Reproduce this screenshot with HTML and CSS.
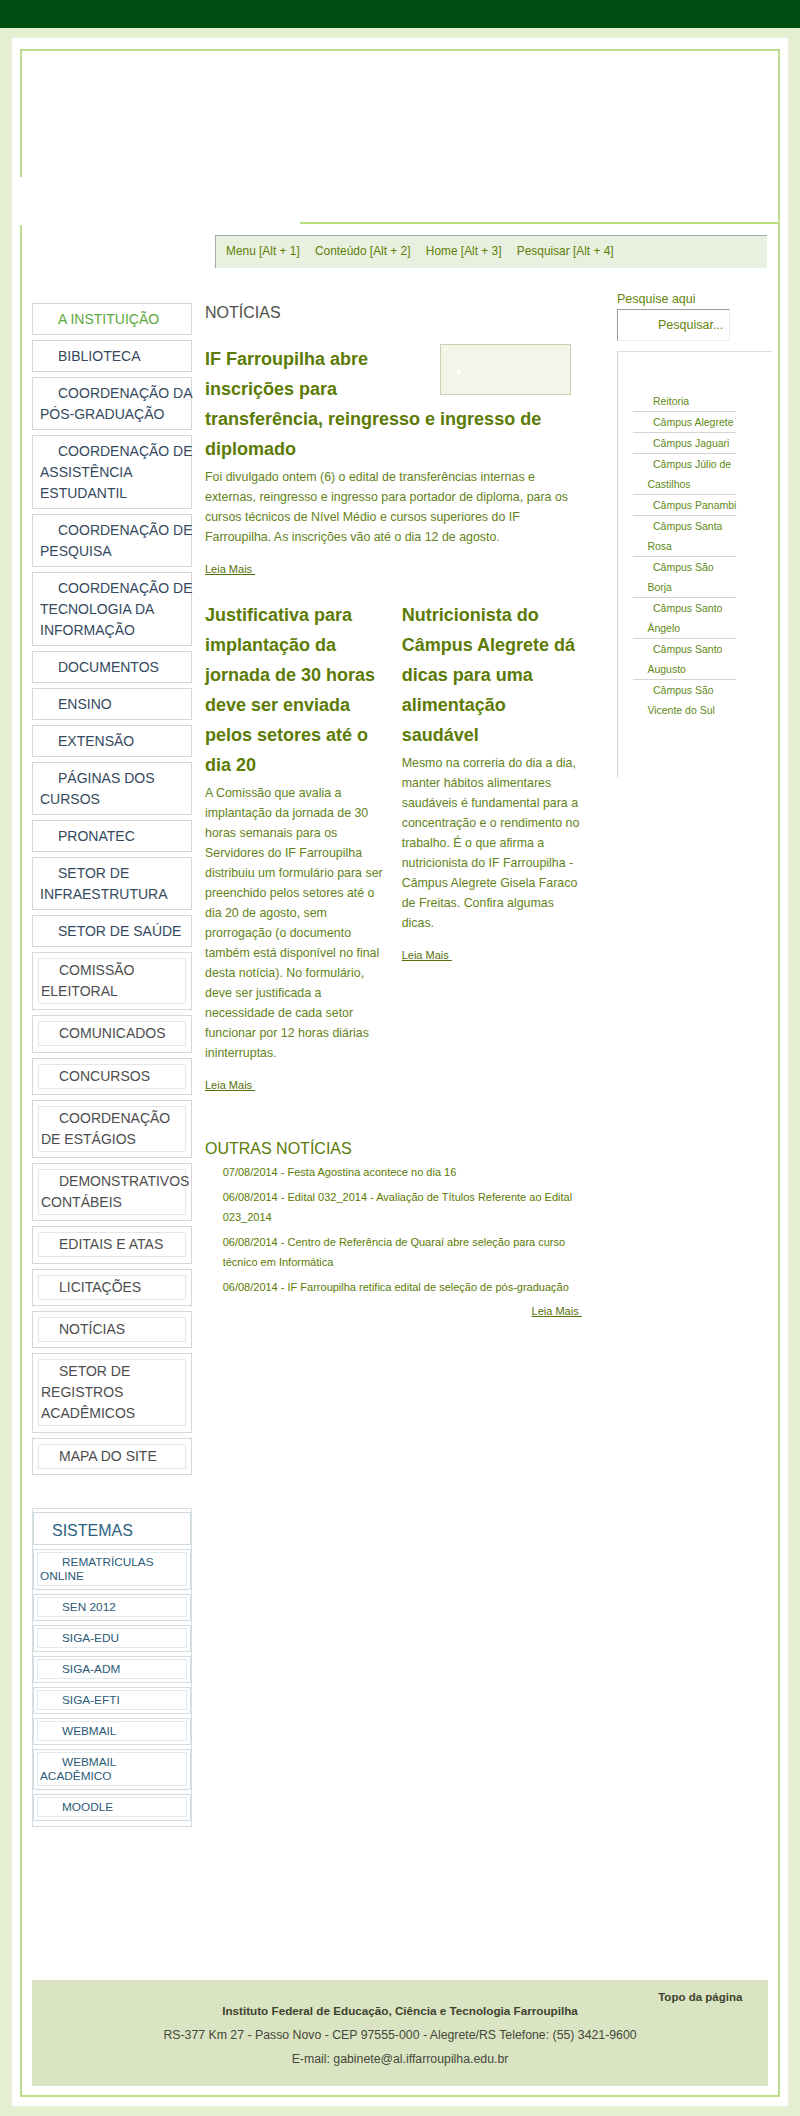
FILE: index.html
```html
<!DOCTYPE html>
<html lang="pt-BR">
<head>
<meta charset="utf-8">
<title>IF Farroupilha - Câmpus Alegrete</title>
<link rel="stylesheet" href="styles.css">
</head>
<body>
<div class="topbar"></div>
<div class="page">
  <div class="frame">
    <div class="banner"></div>
    <div class="banner-line"></div>
    <span class="frame-gap"></span>
    <nav class="access">
      <a href="#menu">Menu [Alt + 1]</a>
      <a href="#conteudo">Conteúdo [Alt + 2]</a>
      <a href="#home">Home [Alt + 3]</a>
      <a href="#busca">Pesquisar [Alt + 4]</a>
    </nav>
    <div class="columns">
      <aside class="sidebar-left" id="menu">
        <ul class="menu">
          <li class="menu-item active"><a href="#">A INSTITUIÇÃO</a></li>
          <li class="menu-item"><a href="#">BIBLIOTECA</a></li>
          <li class="menu-item"><a href="#">COORDENAÇÃO DA PÓS-GRADUAÇÃO</a></li>
          <li class="menu-item"><a href="#">COORDENAÇÃO DE ASSISTÊNCIA ESTUDANTIL</a></li>
          <li class="menu-item"><a href="#">COORDENAÇÃO DE PESQUISA</a></li>
          <li class="menu-item"><a href="#">COORDENAÇÃO DE TECNOLOGIA DA INFORMAÇÃO</a></li>
          <li class="menu-item"><a href="#">DOCUMENTOS</a></li>
          <li class="menu-item"><a href="#">ENSINO</a></li>
          <li class="menu-item"><a href="#">EXTENSÃO</a></li>
          <li class="menu-item"><a href="#">PÁGINAS DOS CURSOS</a></li>
          <li class="menu-item"><a href="#">PRONATEC</a></li>
          <li class="menu-item"><a href="#">SETOR DE INFRAESTRUTURA</a></li>
          <li class="menu-item"><a href="#">SETOR DE SAÚDE</a></li>
          <li class="nested"><a href="#">COMISSÃO ELEITORAL</a></li>
          <li class="nested"><a href="#">COMUNICADOS</a></li>
          <li class="nested"><a href="#">CONCURSOS</a></li>
          <li class="nested"><a href="#">COORDENAÇÃO DE ESTÁGIOS</a></li>
          <li class="nested"><a href="#">DEMONSTRATIVOS CONTÁBEIS</a></li>
          <li class="nested"><a href="#">EDITAIS E ATAS</a></li>
          <li class="nested"><a href="#">LICITAÇÕES</a></li>
          <li class="nested"><a href="#">NOTÍCIAS</a></li>
          <li class="nested"><a href="#">SETOR DE REGISTROS ACADÊMICOS</a></li>
          <li class="nested"><a href="#">MAPA DO SITE</a></li>
        </ul>
        <div class="systems">
          <div class="systems-title">SISTEMAS</div>
          <ul class="systems-list">
            <li><a href="#">REMATRÍCULAS ONLINE</a></li>
            <li><a href="#">SEN 2012</a></li>
            <li><a href="#">SIGA-EDU</a></li>
            <li><a href="#">SIGA-ADM</a></li>
            <li><a href="#">SIGA-EFTI</a></li>
            <li><a href="#">WEBMAIL</a></li>
            <li><a href="#">WEBMAIL ACADÊMICO</a></li>
            <li><a href="#">MOODLE</a></li>
          </ul>
        </div>
      </aside>

      <main class="content" id="conteudo">
        <h2 class="section-title">NOTÍCIAS</h2>
        <article class="news news-main">
          <div class="news-thumb"><span class="thumb-dot"></span></div>
          <h3>IF Farroupilha abre inscrições para transferência, reingresso e ingresso de diplomado</h3>
          <p>Foi divulgado ontem (6) o edital de transferências internas e externas, reingresso e ingresso para portador de diploma, para os cursos técnicos de Nível Médio e cursos superiores do IF Farroupilha. As inscrições vão até o dia 12 de agosto.</p>
          <p class="more"><a href="#">Leia Mais&nbsp;</a></p>
        </article>
        <div class="news-pair">
          <article class="news news-left">
            <h3>Justificativa para implantação da jornada de 30 horas deve ser enviada pelos setores até o dia 20</h3>
            <p>A Comissão que avalia a implantação da jornada de 30 horas semanais para os Servidores do IF Farroupilha distribuiu um formulário para ser preenchido pelos setores até o dia 20 de agosto, sem prorrogação (o documento também está disponível no final desta notícia). No formulário, deve ser justificada a necessidade de cada setor funcionar por 12 horas diárias ininterruptas.</p>
            <p class="more"><a href="#">Leia Mais&nbsp;</a></p>
          </article>
          <article class="news news-right">
            <h3>Nutricionista do Câmpus Alegrete dá dicas para uma alimentação saudável</h3>
            <p>Mesmo na correria do dia a dia, manter hábitos alimentares saudáveis é fundamental para a concentração e o rendimento no trabalho. É o que afirma a nutricionista do IF Farroupilha - Câmpus Alegrete Gisela Faraco de Freitas. Confira algumas dicas.</p>
            <p class="more"><a href="#">Leia Mais&nbsp;</a></p>
          </article>
        </div>
        <h2 class="section-title other">OUTRAS NOTÍCIAS</h2>
        <ul class="other-news">
          <li><a href="#">07/08/2014 - Festa Agostina acontece no dia 16</a></li>
          <li><a href="#">06/08/2014 - Edital 032_2014 - Avaliação de Títulos Referente ao Edital 023_2014</a></li>
          <li><a href="#">06/08/2014 - Centro de Referência de Quaraí abre seleção para curso técnico em Informática</a></li>
          <li><a href="#">06/08/2014 - IF Farroupilha retifica edital de seleção de pós-graduação</a></li>
        </ul>
        <p class="more more-right"><a href="#">Leia Mais&nbsp;</a></p>
      </main>

      <aside class="sidebar-right" id="busca">
        <label class="search-label" for="q">Pesquise aqui</label>
        <input class="search-input" id="q" type="text" placeholder="Pesquisar...">
        <div class="campus-box">
          <ul class="campus-list">
            <li><a href="#">Reitoria</a></li>
            <li><a href="#">Câmpus Alegrete</a></li>
            <li><a href="#">Câmpus Jaguari</a></li>
            <li><a href="#">Câmpus Júlio de Castilhos</a></li>
            <li><a href="#">Câmpus Panambi</a></li>
            <li><a href="#">Câmpus Santa Rosa</a></li>
            <li><a href="#">Câmpus São Borja</a></li>
            <li><a href="#">Câmpus Santo Ângelo</a></li>
            <li><a href="#">Câmpus Santo Augusto</a></li>
            <li><a href="#">Câmpus São Vicente do Sul</a></li>
          </ul>
        </div>
      </aside>
    </div>

    <footer class="footer">
      <div class="top-link"><a href="#">Topo da página</a></div>
      <p class="inst">Instituto Federal de Educação, Ciência e Tecnologia Farroupilha</p>
      <p class="addr">RS-377 Km 27 - Passo Novo - CEP 97555-000 - Alegrete/RS Telefone: (55) 3421-9600</p>
      <p class="addr">E-mail: gabinete@al.iffarroupilha.edu.br</p>
    </footer>
  </div>
</div>
</body>
</html>
```

FILE: styles.css
```css
* {
  box-sizing: content-box;
}

body {
  margin: 0;
  background: #e6efd2;
  font-family: "Liberation Sans", Arial, sans-serif;
  color: #5b7b05;
}

a {
  text-decoration: none;
}

ul {
  list-style: none;
  margin: 0;
  padding: 0;
}

.topbar {
  height: 28px;
  background: #004f12;
}

.page {
  margin: 10px 12px;
  padding: 11px 8px 9px;
  background: #ffffff;
}

.frame {
  position: relative;
  border: 2px solid #bfdd8f;
}

.banner {
  height: 171px;
}

.banner-line {
  height: 2px;
  margin-left: 278px;
  background: #b7de7e;
}

.frame-gap {
  position: absolute;
  left: -2px;
  top: 126px;
  width: 2px;
  height: 48px;
  background: #ffffff;
}

/* access bar */
.access {
  display: flex;
  gap: 15.3px;
  margin: 11px 11px 0 193px;
  padding: 1px 0 3px 10px;
  height: 28px;
  border-top: 1px solid #a9a9a9;
  border-left: 1px solid #a9a9a9;
  background: #e8f0df;
  font-size: 11.9px;
  line-height: 28px;
}

.access a {
  color: #5f7f08;
}

/* columns */
.columns {
  display: flex;
  align-items: flex-start;
  margin: 22px 0 0 10px;
}

.sidebar-left {
  width: 160px;
  margin-top: 13px;
}

.menu-item {
  border: 1px solid #d7d7d7;
  padding: 5px 0 4px 7px;
  margin-bottom: 5px;
  font-size: 14px;
  line-height: 21px;
}

.menu-item a {
  display: block;
  margin-right: -8px;
  text-indent: 18px;
  color: #34495e;
}

.menu-item.active a {
  color: #5aa93c;
}

.nested {
  border: 1px solid #d7d7d7;
  padding: 5px 5px 5.3px;
  margin-bottom: 5px;
  font-size: 14px;
  line-height: 21px;
}

.nested a {
  display: block;
  border: 1px solid #e5e5e5;
  padding: 1px 0 1px 2px;
  text-indent: 18px;
  color: #4d4d4d;
}

.systems {
  margin-top: 33px;
  border: 1px solid #d3dde2;
  padding: 3px 0 1px;
}

.systems-title {
  border: 1px solid #cfd9de;
  padding: 4px 0 0 18px;
  margin-bottom: 4px;
  font-size: 16px;
  line-height: 27px;
  color: #2d6281;
}

.systems-list li {
  border: 1px solid #d3dde2;
  padding: 2.5px 3px;
  margin-bottom: 4px;
}

.systems-list a {
  display: block;
  border: 1px solid #e2eaee;
  padding: 2px 0 2px 2px;
  text-indent: 22px;
  font-size: 11.8px;
  line-height: 14px;
  color: #2b5a77;
}

/* main content */
.content {
  width: 378px;
  margin: 12.5px 0 0 13px;
}

.section-title {
  margin: 0 0 21.3px;
  font-size: 16px;
  line-height: 20px;
  font-weight: normal;
  color: #4f5048;
}

.section-title.other {
  margin: 44.3px 0 2.8px;
  color: #5b7b05;
}

.news h3 {
  margin: 0;
  font-size: 18px;
  line-height: 30px;
  font-weight: bold;
  color: #5b7b05;
}

.news p {
  margin: 3px 0 0;
  font-size: 12.4px;
  line-height: 20px;
  color: #63831a;
}

.news-thumb {
  float: right;
  width: 129px;
  height: 49px;
  margin: 0.5px 12px 6px 10px;
  border: 1px solid #c9d1b2;
  background: #f2f6e9;
}

.thumb-dot {
  display: block;
  width: 4px;
  height: 4px;
  margin: 25px 0 0 16px;
  background: #ffffff;
}

.more {
  font-size: 11px;
  line-height: 20px;
}

.news p.more {
  margin-top: 12px;
  font-size: 11px;
}

.more a {
  color: #55700a;
  text-decoration: underline;
}

.news-pair {
  display: flex;
  gap: 13.7px;
  margin-top: 20.9px;
}

.news-left {
  width: 183px;
}

.news-right {
  flex: 1;
}

.other-news {
  padding-left: 17.7px;
  font-size: 11px;
  line-height: 20px;
}

.other-news li {
  margin-bottom: 5px;
}

.other-news a {
  color: #5b7b05;
}

.more-right {
  margin: -0.6px 1.3px 0 0;
  text-align: right;
}

/* right sidebar */
.sidebar-right {
  width: 155px;
  margin: 1px 0 0 34px;
}

.search-label {
  display: block;
  font-size: 12.5px;
  line-height: 16px;
  color: #63840a;
}

.search-input {
  display: block;
  box-sizing: border-box;
  width: 113.4px;
  height: 31.4px;
  margin-top: 2.3px;
  padding: 0 0 0 40px;
  border: 1px solid;
  border-color: #9a9a9a #ececec #ececec #9a9a9a;
  background: #ffffff;
  font-family: "Liberation Sans", Arial, sans-serif;
  font-size: 12.5px;
  color: #63840a;
  outline: none;
}

.search-input::placeholder {
  color: #63840a;
  opacity: 1;
}

.campus-box {
  margin-top: 10.3px;
  height: 385.7px;
  padding-top: 39.3px;
  border-top: 1px solid #d6dddd;
  border-left: 1px solid #ccd3d3;
}

.campus-list {
  width: 103.7px;
  margin-left: 14.7px;
}

.campus-list li {
  border-bottom: 1px solid #d4d4d4;
  font-size: 10.5px;
  line-height: 20px;
}

.campus-list li:last-child {
  border-bottom: none;
}

.campus-list a {
  display: block;
  margin-right: -2px;
  padding-left: 14.7px;
  text-indent: 5.6px;
  color: #5f8a18;
}

/* footer */
.footer {
  margin: 153.3px 10px 9px;
  padding: 9.7px 25.7px 14.7px;
  background: #dbe4c2;
  text-align: center;
  color: #45483c;
}

.top-link {
  text-align: right;
  font-size: 11.5px;
  line-height: 14px;
  font-weight: bold;
}

.top-link a {
  color: #3e432f;
}

.inst {
  margin: 0;
  font-size: 11.7px;
  line-height: 14px;
  font-weight: bold;
  color: #3e432f;
}

.addr {
  margin: 0;
  font-size: 12.3px;
  line-height: 24px;
}

.inst + .addr {
  margin-top: 5.3px;
}
```
